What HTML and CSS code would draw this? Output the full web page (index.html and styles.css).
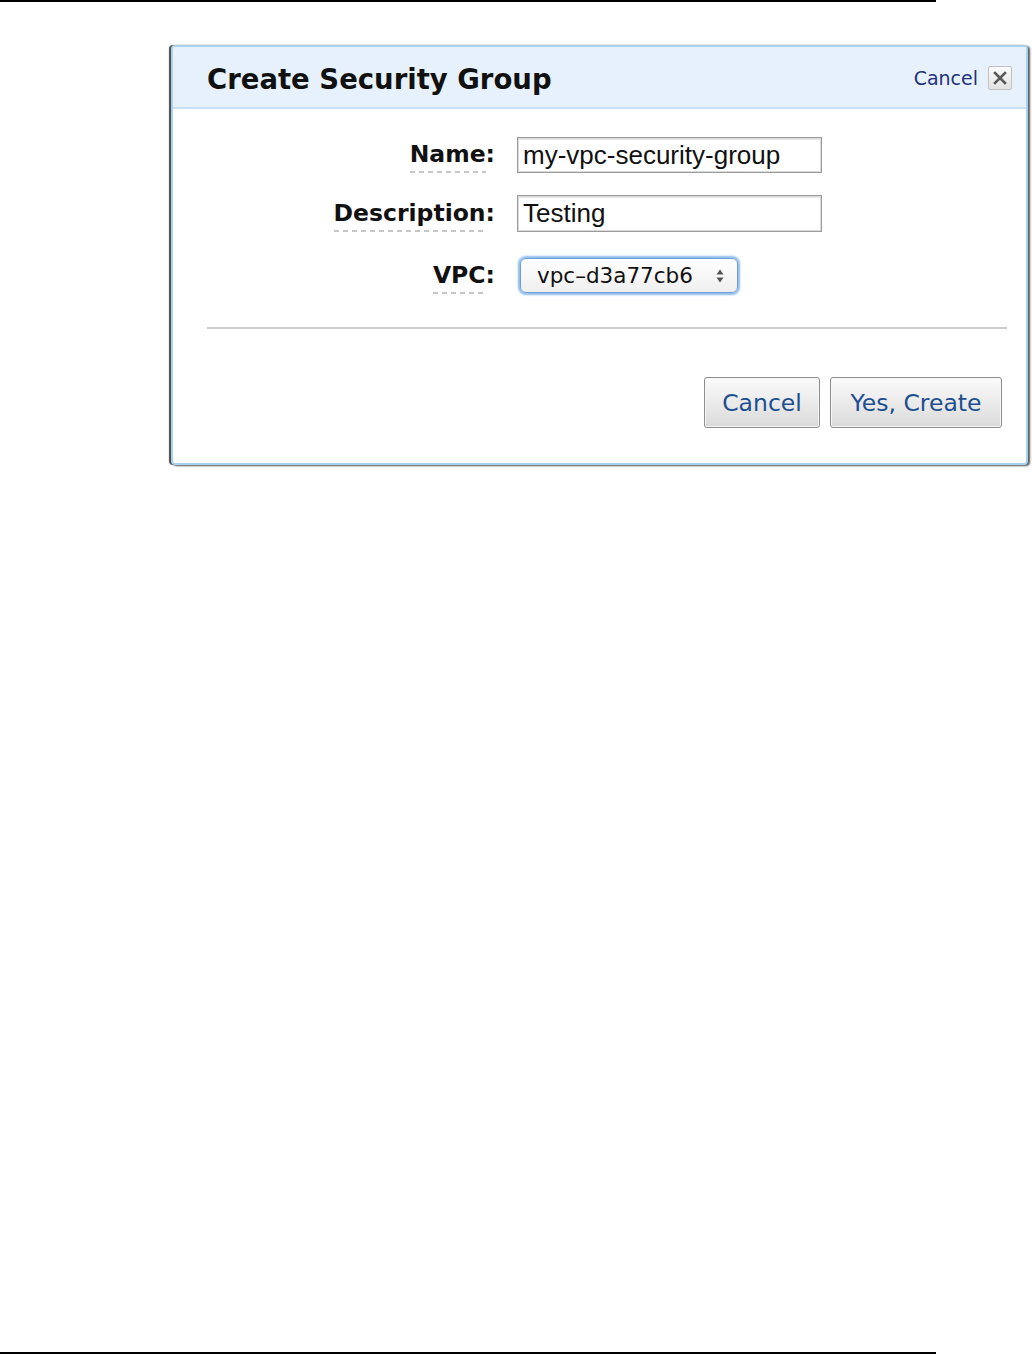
FILE: index.html
```html
<!DOCTYPE html>
<html>
<head>
<meta charset="utf-8">
<link rel="stylesheet" href="styles.css">
</head>
<body>
<div class="page">
  <div class="rule"></div>
  <div class="dialog">
    <div class="dlg-head">
      <h1 class="title">Create Security Group</h1>
      <div class="close">
        <span class="close-text">Cancel</span>
        <span class="close-box"><svg width="14" height="14" viewBox="0 0 14 14"><path d="M2 2L12 12M12 2L2 12" stroke="#5a5a5a" stroke-width="2.6" stroke-linecap="square"/></svg></span>
      </div>
    </div>
    <div class="dlg-body">
      <div class="form">
        <div class="lbl-cell r1"><span class="lbl"><span class="dash">Name</span>:</span></div>
        <div class="field r1"><div class="input">my-vpc-security-group</div></div>
        <div class="lbl-cell r2"><span class="lbl"><span class="dash">Description</span>:</span></div>
        <div class="field r2"><div class="input">Testing</div></div>
        <div class="lbl-cell r3"><span class="lbl"><span class="dash">VPC</span>:</span></div>
        <div class="field r3">
          <div class="select">
            <span class="sel-text">vpc–d3a77cb6</span>
            <svg class="sel-arrows" width="10" height="16" viewBox="0 0 10 16"><path d="M5 1.5L8.5 6.5H1.5Z M5 14.5L8.5 9.5H1.5Z" fill="#555"/></svg>
          </div>
        </div>
      </div>
      <div class="sep"></div>
      <div class="actions">
        <div class="btn btn-cancel">Cancel</div>
        <div class="btn btn-create">Yes, Create</div>
      </div>
    </div>
  </div>
  <div class="spacer"></div>
  <div class="rule"></div>
</div>
</body>
</html>
```
FILE: styles.css
```css
html, body {
  margin: 0;
  padding: 0;
  background: #ffffff;
}

.page {
  width: 1032px;
  height: 1354px;
  display: flex;
  flex-direction: column;
  overflow: hidden;
}

.rule {
  width: 936px;
  height: 2px;
  background: #000;
  flex: none;
}

.spacer {
  flex: 1;
}

.dialog {
  margin: 43px 0 0 171px;
  width: 857px;
  box-sizing: border-box;
  border: 2px solid #a9d2f0;
  border-radius: 4px;
  background: #fff;
  box-shadow: -2px 0 1px #4a4a4a, 2px 1px 2px #5a5a5a;
  flex: none;
}

.dlg-head {
  height: 62px;
  box-sizing: border-box;
  background: #e7f1fb;
  border-bottom: 2px solid #c9dff2;
  display: flex;
  align-items: center;
  justify-content: space-between;
  padding: 0 14px 0 34px;
}

.title {
  margin: 0;
  font-family: "DejaVu Sans", Verdana, sans-serif;
  font-weight: bold;
  font-size: 27.5px;
  color: #111;
  padding-top: 4px;
}

.close {
  display: flex;
  align-items: center;
  gap: 10px;
  padding-top: 2px;
}

.close-text {
  font-family: "DejaVu Sans", Verdana, sans-serif;
  font-size: 19px;
  color: #23337a;
}

.close-box {
  width: 24px;
  height: 24px;
  box-sizing: border-box;
  border: 1px solid #c2c2c2;
  border-radius: 2px;
  background: linear-gradient(#fbfbfb, #e2e2e2);
  display: flex;
  align-items: center;
  justify-content: center;
}

.dlg-body {
  padding: 28px 0 35px 0;
}

.form {
  display: grid;
  grid-template-columns: 322px 1fr;
  grid-template-rows: 36px 59px 61px;
  column-gap: 22px;
}

.r2 { margin-top: 22px; }
.r3 { margin-top: 26px; }

.lbl-cell {
  display: flex;
  justify-content: flex-end;
  align-items: center;
}

.lbl {
  font-family: "DejaVu Sans", Verdana, sans-serif;
  font-weight: bold;
  font-size: 23.5px;
  line-height: 26px;
  color: #111;
  padding-top: 4px;
}

.dash {
  display: inline-block;
  padding-bottom: 6px;
  background-image: repeating-linear-gradient(90deg, #c6c6c6 0 5px, transparent 5px 9px);
  background-size: 100% 2px;
  background-repeat: no-repeat;
  background-position: 0 100%;
}

.field {
  display: flex;
  align-items: center;
}

.input {
  width: 305px;
  height: 100%;
  box-sizing: border-box;
  border: 1px solid #9c9c9c;
  box-shadow: inset 0 0 0 1px #d9d9d9, inset 0 2px 1px #e6e6e6;
  font-family: "Liberation Sans", Arial, sans-serif;
  font-size: 26px;
  color: #111;
  padding: 0 5px;
  display: flex;
  align-items: center;
  white-space: nowrap;
}

.select {
  margin-left: 3px;
  width: 218px;
  height: 35px;
  box-sizing: border-box;
  border: 1px solid #6f9fd6;
  border-radius: 6px;
  background: linear-gradient(#ffffff, #efefef);
  box-shadow: 0 0 2px 2px #8cbcec;
  display: flex;
  align-items: center;
  justify-content: space-between;
  padding: 0 12px 0 16px;
}

.sel-text {
  font-family: "DejaVu Sans", "Lucida Grande", sans-serif;
  font-size: 21.5px;
  color: #111;
}

.sep {
  margin: 34px 19px 0 34px;
  height: 2px;
  background: #cccccc;
}

.actions {
  margin-top: 48px;
  display: flex;
  justify-content: flex-end;
  gap: 10px;
  padding-right: 24px;
}

.btn {
  height: 51px;
  box-sizing: border-box;
  border: 1px solid #8e8e8e;
  border-radius: 3px;
  background: linear-gradient(#fbfbfb, #e9e9e9 55%, #dadada);
  box-shadow: inset 0 0 0 1px #f6f6f6;
  font-family: "DejaVu Sans", Verdana, sans-serif;
  font-size: 23.5px;
  color: #1d4f8f;
  display: flex;
  align-items: center;
  justify-content: center;
}

.btn-cancel { width: 116px; }
.btn-create { width: 172px; }
```
